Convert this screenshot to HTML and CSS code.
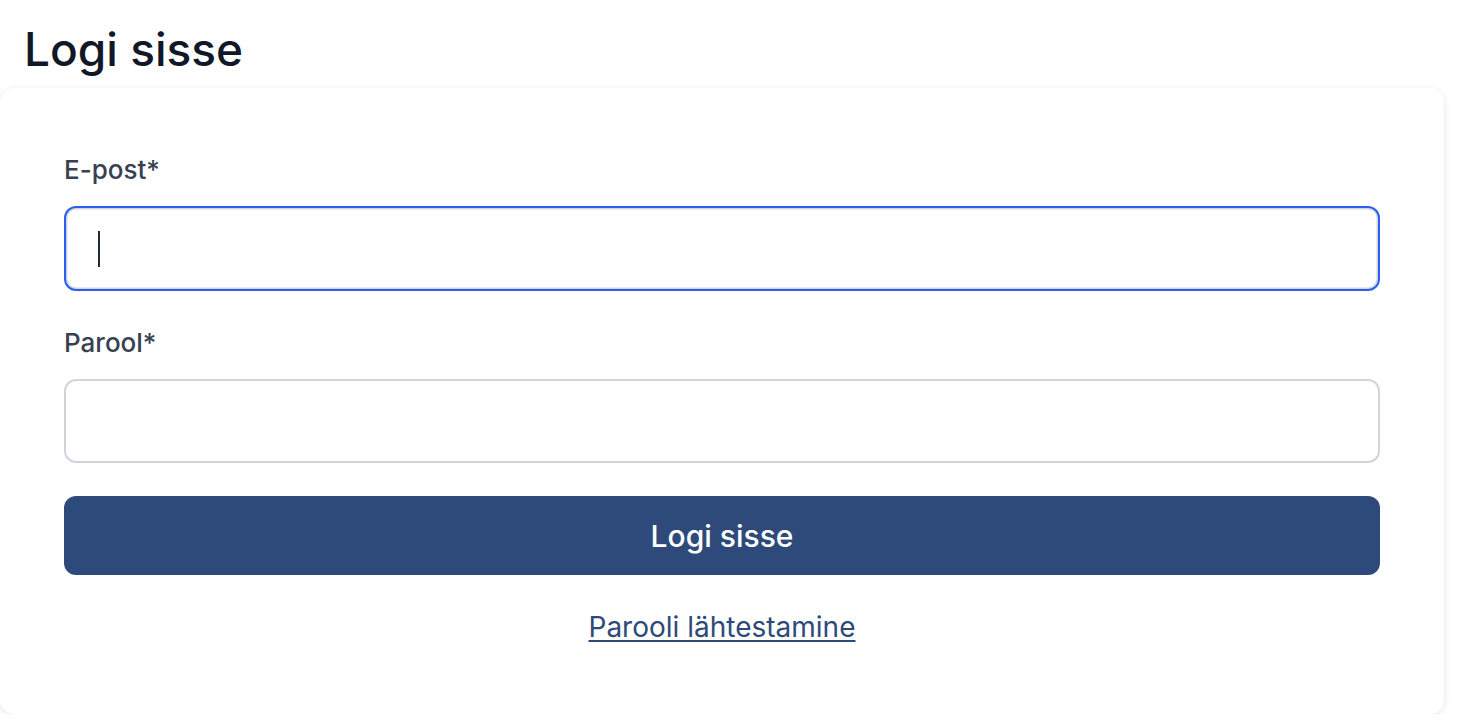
FILE: index.html
```html
<!DOCTYPE html>
<html lang="et">
<head>
<meta charset="utf-8">
<title>Logi sisse</title>
<link rel="stylesheet" href="styles.css">
</head>
<body>
<main class="page">
  <h1 class="title">Logi sisse</h1>
  <section class="card">
    <div class="field">
      <label class="label">E-post*</label>
      <div class="input input-focus"><span class="caret"></span></div>
    </div>
    <div class="field">
      <label class="label">Parool*</label>
      <div class="input"></div>
    </div>
    <button class="btn" type="button">Logi sisse</button>
    <div class="link-row"><a class="link" href="#">Parooli lähtestamine</a></div>
  </section>
</main>
</body>
</html>
```
FILE: styles.css
```css
* { box-sizing: border-box; }
html, body { margin: 0; padding: 0; background: #ffffff; }
body { font-family: Inter, "Noto Sans", sans-serif; color: #111827; }
.page { width: 1444px; }
.title {
  margin: 22px 0 12px 24px;
  font-size: 46px;
  line-height: 54px;
  font-weight: 500;
  color: #111827;
}
.card {
  background: #ffffff;
  border-radius: 14px;
  box-shadow: 0 2px 8px rgba(0,0,0,0.09), 0 0 2px rgba(0,0,0,0.04);
  padding: 64px 64px 65px 64px;
  display: flex;
  flex-direction: column;
}
.field { display: flex; flex-direction: column; margin-bottom: 34px; }
.field + .field { margin-bottom: 33px; }
.label {
  font-size: 26px;
  line-height: 36px;
  color: #374151;
  font-weight: 500;
  margin-bottom: 18px;
}
.input {
  height: 84px;
  border: 2px solid #d1d5db;
  border-radius: 12px;
  background: #fff;
  display: flex;
  align-items: center;
  padding-left: 32px;
}
.input-focus {
  height: 85px;
  border: 2px solid #2b5ff0;
  box-shadow: inset 0 0 0 1.5px #d1d5db;
}
.caret { width: 2px; height: 36px; background: #1f2937; }
.btn {
  height: 79px;
  border: none;
  border-radius: 12px;
  background: #2e4a7a;
  color: #ffffff;
  font-family: Inter, "Noto Sans", sans-serif;
  font-size: 30px;
  font-weight: 500;
  cursor: pointer;
}
.link-row { text-align: center; margin-top: 34px; line-height: 36px; }
.link {
  color: #2e4a7a;
  font-size: 28px;
  font-weight: 400;
  text-decoration: underline;
  text-underline-offset: 3px;
  text-decoration-thickness: 2px;
}
```
